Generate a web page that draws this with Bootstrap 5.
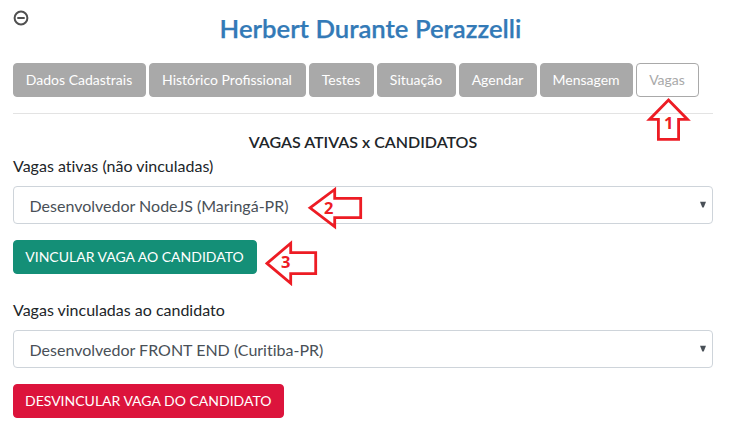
<!DOCTYPE html>
<html lang="pt-BR">
<head>
<meta charset="utf-8">
<title>Herbert Durante Perazzelli</title>
<link rel="stylesheet" href="https://cdn.jsdelivr.net/npm/bootstrap@5.3.0/dist/css/bootstrap.min.css">
<style>
body{font-family:Lato,"Liberation Sans",sans-serif;font-size:16px;color:#212529;background:#fff;overflow:hidden}
.panel{width:700px;margin-left:13px;padding-top:10px}
.collapse-icon{height:0}
.collapse-icon svg{display:block}
.person{font-size:25.7px;font-weight:600;color:#337ab7;-webkit-text-stroke:.25px #337ab7;line-height:36px;height:36px;margin:0 0 17px 15px}
.btn{--bs-btn-font-size:14px;--bs-btn-line-height:20px;--bs-btn-border-radius:4px;height:34px;white-space:nowrap}
.tabs{gap:3px;height:34px}
.tabs .btn{padding-left:0;padding-right:1px;--bs-btn-color:#fff;--bs-btn-bg:#a9a9a9;--bs-btn-border-color:#a9a9a9}
.tabs .btn.current{--bs-btn-color:#a9a9a9;--bs-btn-bg:#fff}
.w-dados{width:133px}.w-hist{width:157px}.w-testes{width:65px}.w-sit{width:79px}.w-agendar{width:78px}.w-msg{width:93px}.w-vagas{width:63px}
.rule{margin:16px 0;border-top:1px solid #e3e3e3;opacity:1}
.section-title{font-size:16px;font-weight:600;line-height:24px;margin:0}
.form-label{line-height:24px;margin:0 0 8px;display:block;font-variant-ligatures:none}
.form-select{height:38px;border:1px solid #ced4da;border-radius:4px;color:#495057;padding:7px 16px 5px 15.5px;background-image:none;font-variant-ligatures:none}
.arrow{right:7px;top:15px}
.btn-link-job{--bs-btn-color:#fff;--bs-btn-bg:#148f77;--bs-btn-border-color:#148f77;width:244px;padding-left:11px}
.btn-unlink-job{--bs-btn-color:#fff;--bs-btn-bg:#dc143c;--bs-btn-border-color:#dc143c;width:271px;padding-left:11px}
.callouts{left:0;top:0;pointer-events:none}
.callouts text{font:700 16.5px "Open Sans",sans-serif;fill:#ed1c24}
.job-group{margin-bottom:24px}
</style>
</head>
<body>
<main class="panel">
  <div class="collapse-icon"><svg width="16" height="16" viewBox="0 0 16 16" fill="none" stroke="#505050" stroke-width="2"><circle cx="8" cy="8" r="6.4"/><path d="M4.3 8h7.4"/></svg></div>
  <h1 class="person text-center">Herbert Durante Perazzelli</h1>
  <nav class="tabs d-flex">
    <button class="btn w-dados">Dados Cadastrais</button>
    <button class="btn w-hist">Histórico Profissional</button>
    <button class="btn w-testes">Testes</button>
    <button class="btn w-sit">Situação</button>
    <button class="btn w-agendar">Agendar</button>
    <button class="btn w-msg">Mensagem</button>
    <button class="btn current w-vagas">Vagas</button>
  </nav>
  <hr class="rule">
  <h2 class="section-title text-center">VAGAS ATIVAS x CANDIDATOS</h2>
  <section class="job-group">
    <label class="form-label" for="ativas">Vagas ativas (não vinculadas)</label>
    <div class="position-relative mb-3">
      <select class="form-select" id="ativas"><option>Desenvolvedor NodeJS (Maringá-PR)</option></select>
      <svg class="arrow position-absolute" width="6" height="7" viewBox="0 0 6 7"><path d="M0 .7h6L3.7 6.5H2.3z" fill="#495057"/></svg>
    </div>
    <button class="btn btn-link-job">VINCULAR VAGA AO CANDIDATO</button>
  </section>
  <section>
    <label class="form-label" for="vinculadas">Vagas vinculadas ao candidato</label>
    <div class="position-relative mb-3">
      <select class="form-select" id="vinculadas"><option>Desenvolvedor FRONT END (Curitiba-PR)</option></select>
      <svg class="arrow position-absolute" width="6" height="7" viewBox="0 0 6 7"><path d="M0 .7h6L3.7 6.5H2.3z" fill="#495057"/></svg>
    </div>
    <button class="btn btn-unlink-job">DESVINCULAR VAGA DO CANDIDATO</button>
  </section>
</main>
<svg class="callouts position-absolute" width="738" height="430" viewBox="0 0 738 430">
  <g fill="none" stroke="#ed1c24" stroke-width="2.8" stroke-linejoin="miter" stroke-miterlimit="3">
    <path d="M668.5 100l19 19.4h-8.9v20h-20.2v-20h-8.9z"/>
    <path d="M310 207.8l24.7-18.3v8.9h26v19.3h-26v8.9z"/>
    <path d="M267 263.4l23.7-20.2v9.5h25v21h-25v9.6z"/>
  </g>
  <g>
    <text x="664" y="129">1</text>
    <text x="324" y="214">2</text>
    <text x="281" y="268">3</text>
  </g>
</svg>
<script src="https://cdn.jsdelivr.net/npm/bootstrap@5.3.0/dist/js/bootstrap.bundle.min.js"></script>
</body>
</html>
